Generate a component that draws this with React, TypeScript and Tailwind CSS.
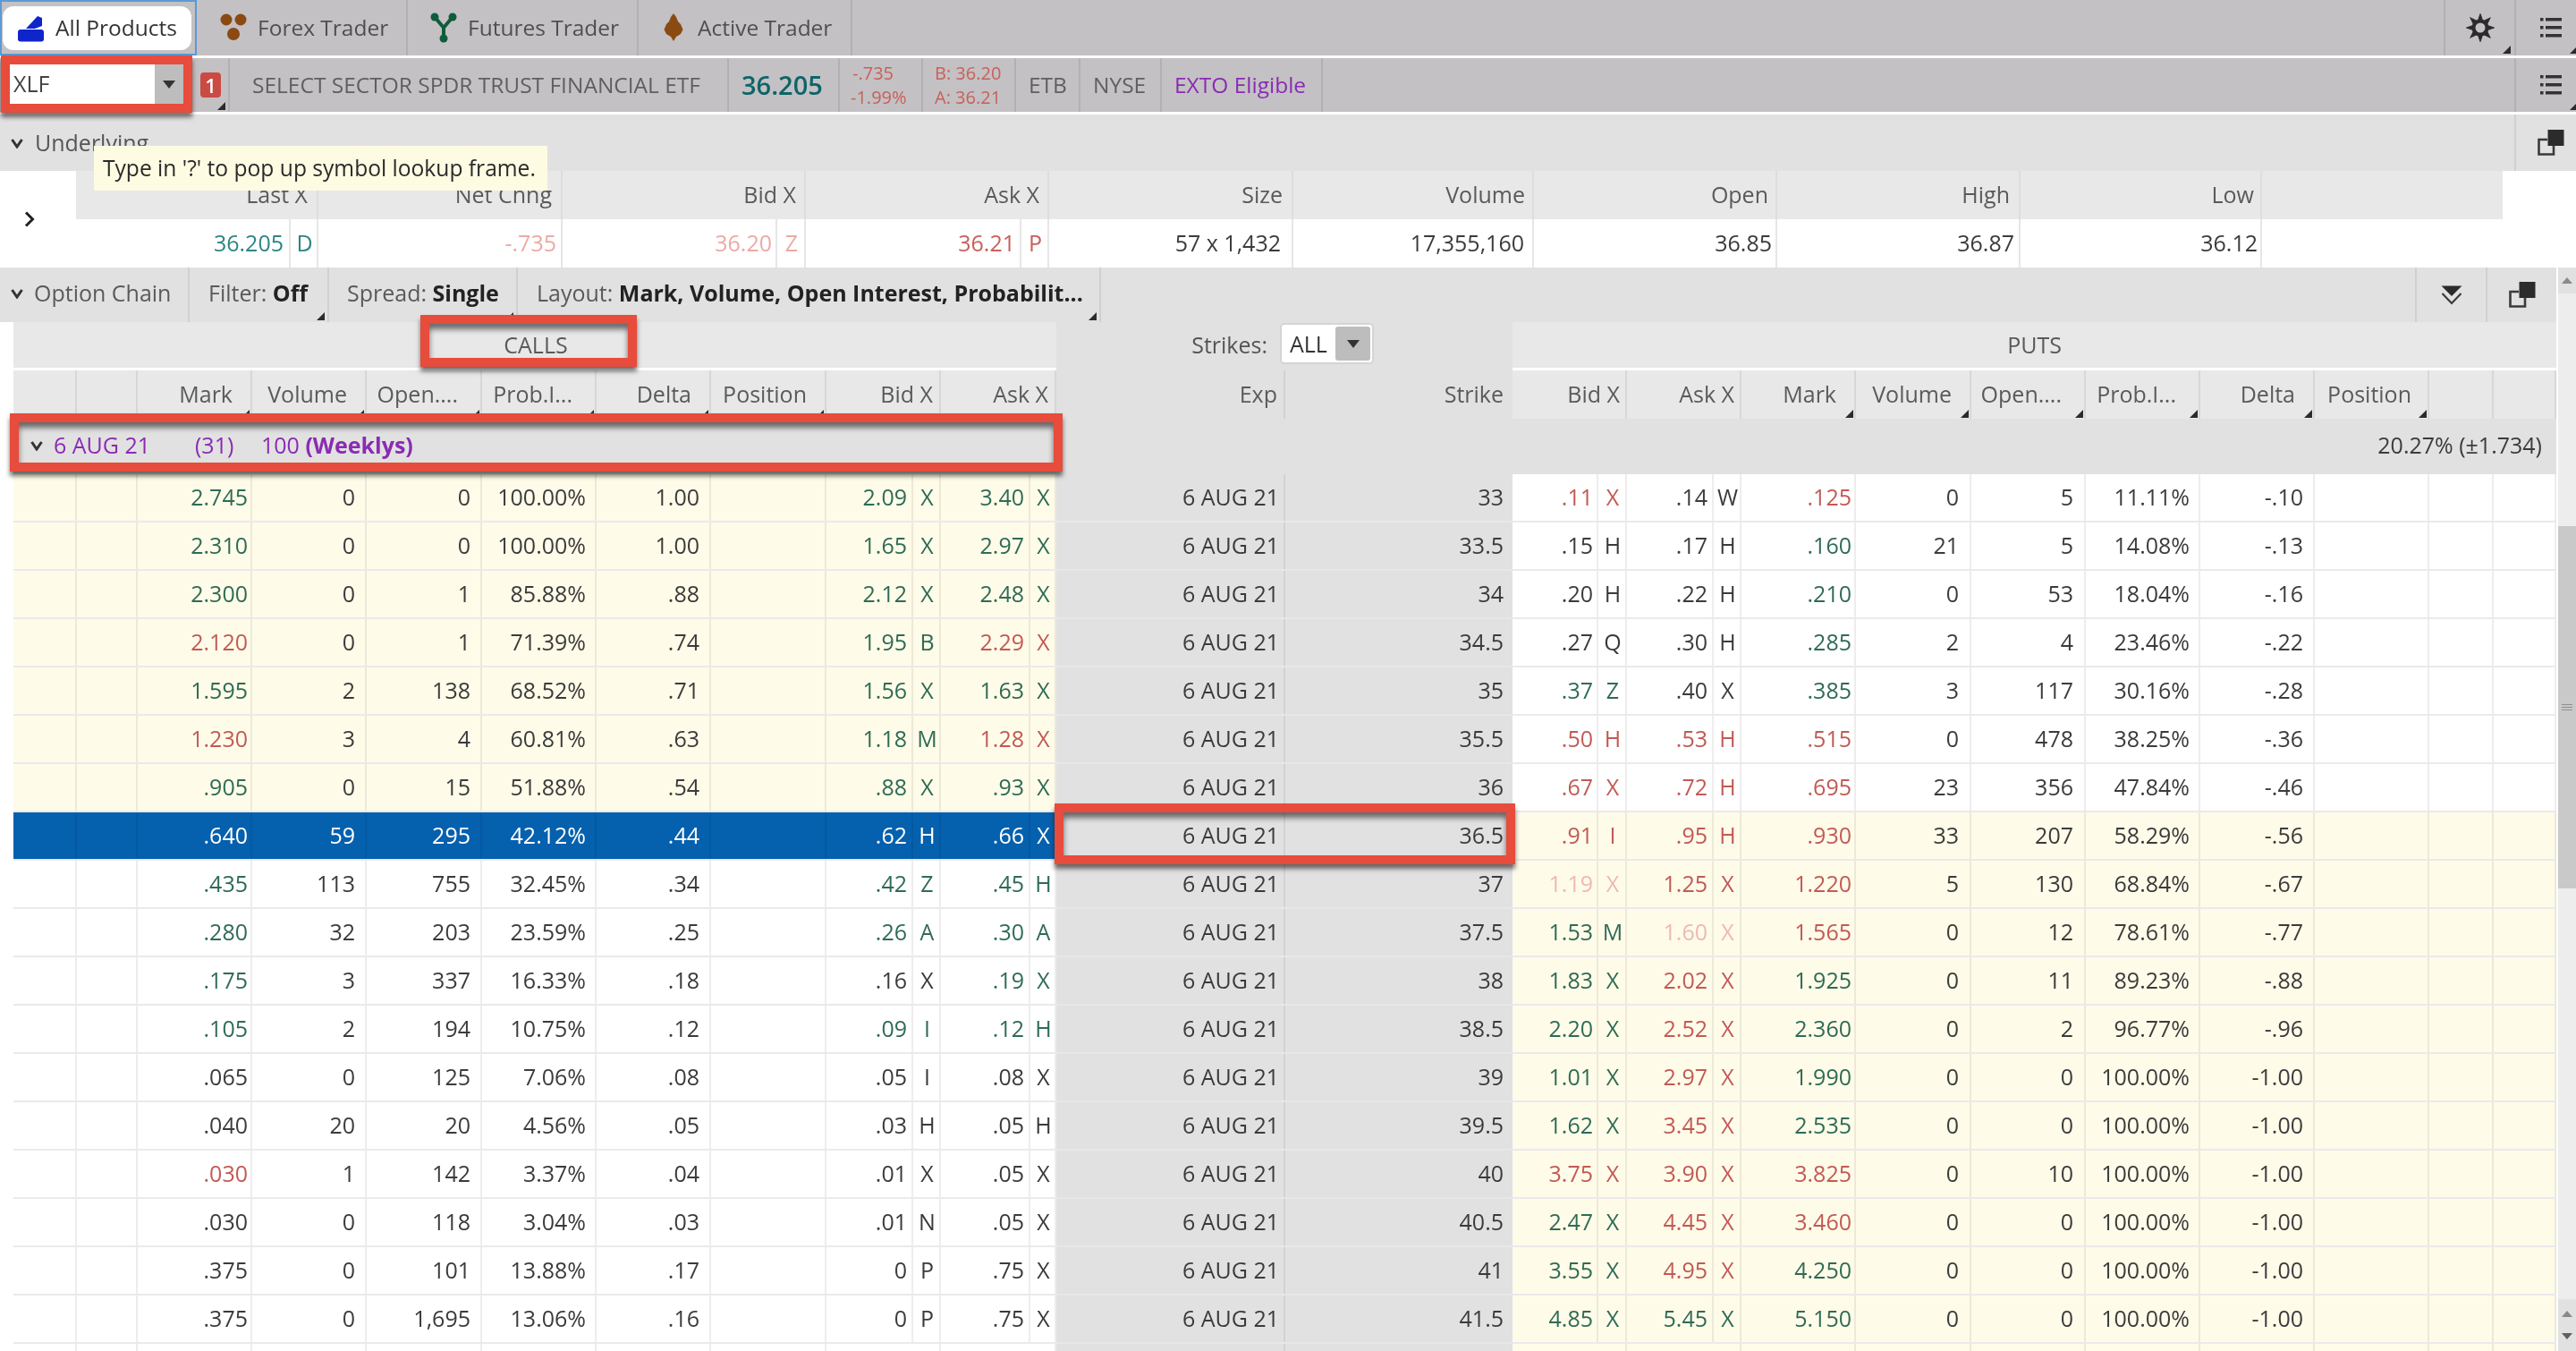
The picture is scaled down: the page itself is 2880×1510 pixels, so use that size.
import React from "react";

const C: Record<string, string> = {
  d: "text-[#3b3b3b]",
  g: "text-[#2f6b55]",
  r: "text-[#c25a54]",
  p: "text-[#efb9b4]",
  w: "text-white",
};

type CallRow = [string, string, string, string, string, string, string, string, string, string, string, string];
type PutRow = [string, string, string, string, string, string, string, string, string, string, string, string];

const calls: CallRow[] = [
  ["2.745", "g", "0", "0", "100.00%", "1.00", "2.09", "g", "X", "3.40", "g", "X"],
  ["2.310", "g", "0", "0", "100.00%", "1.00", "1.65", "g", "X", "2.97", "g", "X"],
  ["2.300", "g", "0", "1", "85.88%", ".88", "2.12", "g", "X", "2.48", "g", "X"],
  ["2.120", "r", "0", "1", "71.39%", ".74", "1.95", "g", "B", "2.29", "r", "X"],
  ["1.595", "g", "2", "138", "68.52%", ".71", "1.56", "g", "X", "1.63", "g", "X"],
  ["1.230", "r", "3", "4", "60.81%", ".63", "1.18", "g", "M", "1.28", "r", "X"],
  [".905", "g", "0", "15", "51.88%", ".54", ".88", "g", "X", ".93", "g", "X"],
  [".640", "w", "59", "295", "42.12%", ".44", ".62", "w", "H", ".66", "w", "X"],
  [".435", "g", "113", "755", "32.45%", ".34", ".42", "g", "Z", ".45", "g", "H"],
  [".280", "g", "32", "203", "23.59%", ".25", ".26", "g", "A", ".30", "g", "A"],
  [".175", "g", "3", "337", "16.33%", ".18", ".16", "d", "X", ".19", "g", "X"],
  [".105", "g", "2", "194", "10.75%", ".12", ".09", "g", "I", ".12", "g", "H"],
  [".065", "d", "0", "125", "7.06%", ".08", ".05", "d", "I", ".08", "d", "X"],
  [".040", "d", "20", "20", "4.56%", ".05", ".03", "d", "H", ".05", "d", "H"],
  [".030", "r", "1", "142", "3.37%", ".04", ".01", "d", "X", ".05", "d", "X"],
  [".030", "d", "0", "118", "3.04%", ".03", ".01", "d", "N", ".05", "d", "X"],
  [".375", "d", "0", "101", "13.88%", ".17", "0", "d", "P", ".75", "d", "X"],
  [".375", "d", "0", "1,695", "13.06%", ".16", "0", "d", "P", ".75", "d", "X"],
];

const strikes = ["33", "33.5", "34", "34.5", "35", "35.5", "36", "36.5", "37", "37.5", "38", "38.5", "39", "39.5", "40", "40.5", "41", "41.5"];

const puts: PutRow[] = [
  [".11", "r", "X", ".14", "d", "W", ".125", "r", "0", "5", "11.11%", "-.10"],
  [".15", "d", "H", ".17", "d", "H", ".160", "g", "21", "5", "14.08%", "-.13"],
  [".20", "d", "H", ".22", "d", "H", ".210", "g", "0", "53", "18.04%", "-.16"],
  [".27", "d", "Q", ".30", "d", "H", ".285", "g", "2", "4", "23.46%", "-.22"],
  [".37", "g", "Z", ".40", "d", "X", ".385", "g", "3", "117", "30.16%", "-.28"],
  [".50", "r", "H", ".53", "r", "H", ".515", "r", "0", "478", "38.25%", "-.36"],
  [".67", "r", "X", ".72", "r", "H", ".695", "r", "23", "356", "47.84%", "-.46"],
  [".91", "r", "I", ".95", "r", "H", ".930", "r", "33", "207", "58.29%", "-.56"],
  ["1.19", "p", "X", "1.25", "r", "X", "1.220", "r", "5", "130", "68.84%", "-.67"],
  ["1.53", "g", "M", "1.60", "p", "X", "1.565", "r", "0", "12", "78.61%", "-.77"],
  ["1.83", "g", "X", "2.02", "r", "X", "1.925", "g", "0", "11", "89.23%", "-.88"],
  ["2.20", "g", "X", "2.52", "r", "X", "2.360", "g", "0", "2", "96.77%", "-.96"],
  ["1.01", "g", "X", "2.97", "r", "X", "1.990", "g", "0", "0", "100.00%", "-1.00"],
  ["1.62", "g", "X", "3.45", "r", "X", "2.535", "g", "0", "0", "100.00%", "-1.00"],
  ["3.75", "r", "X", "3.90", "r", "X", "3.825", "r", "0", "10", "100.00%", "-1.00"],
  ["2.47", "g", "X", "4.45", "r", "X", "3.460", "r", "0", "0", "100.00%", "-1.00"],
  ["3.55", "g", "X", "4.95", "r", "X", "4.250", "g", "0", "0", "100.00%", "-1.00"],
  ["4.85", "g", "X", "5.45", "g", "X", "5.150", "g", "0", "0", "100.00%", "-1.00"],
];

const CALL_GRID = "grid grid-cols-[71px_68px_128px_128px_129px_128px_128px_129px_128px_129px] w-[1166px] shrink-0";
const PUT_GRID = "grid grid-cols-[128px_128px_128px_129px_128px_128px_128px_128px_72px_70px] w-[1167px] shrink-0";
const MID_GRID = "grid grid-cols-[256px_254px] w-[510px] shrink-0";
const UND_GRID = "grid grid-cols-[271px_273px_272px_272px_273px_269px_272px_272px_270px_269px] w-[2713px]";
const VLINE = "border-r-2 border-black/[0.07]";

function Tri({ className = "right-[2px] bottom-[1px]" }: { className?: string }) {
  return (
    <svg className={`absolute ${className}`} width="9" height="9" viewBox="0 0 9 9">
      <path d="M9 0V9H0Z" fill="#2b2b2b" />
    </svg>
  );
}

function Sep() {
  return <div className="w-[2px] self-stretch bg-[#b2b0b3] shrink-0" />;
}

function Chevron({ className = "" }: { className?: string }) {
  return (
    <svg className={className} width="14" height="12" viewBox="0 0 14 12">
      <path d="M1.5 2 7 10 12.5 2" fill="none" stroke="#333" strokeWidth="3" />
    </svg>
  );
}

function ListIcon() {
  return (
    <svg width="24" height="24" viewBox="0 0 24 24" fill="#333">
      <rect x="0" y="1" width="3.5" height="3.5" />
      <rect x="6" y="1" width="18" height="3.5" />
      <rect x="0" y="10" width="3.5" height="3.5" />
      <rect x="6" y="10" width="18" height="3.5" />
      <rect x="0" y="19" width="3.5" height="3.5" />
      <rect x="6" y="19" width="18" height="3.5" />
    </svg>
  );
}

function Popout() {
  return (
    <svg width="30" height="29" viewBox="0 0 30 29">
      <rect x="11.5" y="0" width="18" height="18" fill="#2b2b2b" />
      <path d="M11 11H1.5V27.5H18V18" fill="none" stroke="#3a3a3a" strokeWidth="2.6" />
    </svg>
  );
}

function Gear() {
  const rays = [0, 45, 90, 135, 180, 225, 270, 315];
  return (
    <svg width="32" height="32" viewBox="0 0 32 32">
      {rays.map((a) => (
        <path key={a} d="M16 0.5 18.6 8H13.4Z" fill="#2b2b2b" stroke="#2b2b2b" strokeWidth="1" transform={`rotate(${a} 16 16)`} />
      ))}
      <circle cx="16" cy="16" r="7.5" fill="none" stroke="#2b2b2b" strokeWidth="4" />
    </svg>
  );
}

function Tabs() {
  return (
    <div className="flex h-[62px] bg-[#c3c1c4] text-[24.5px] text-[#4f4f4f]">
      <div className="w-[220px] shrink-0 border-2 border-[#5a9ad6] pt-[5px] pb-[4px] pl-[1px] pr-[4px]">
        <div className="h-full bg-white rounded-[12px] flex items-center pl-[17px] gap-[12px] text-[#333]">
          <svg width="30" height="30" viewBox="0 0 30 30">
            <path d="M9 15 22 1l5 2v9l-8 3Z" fill="#1024cc" />
            <rect x="0" y="16" width="29" height="13.5" rx="3" fill="#1024cc" />
          </svg>
          All Products
        </div>
      </div>
      <div className="w-[236px] shrink-0 flex items-center pl-[26px] gap-[12px] border-r-2 border-[#b2b0b3]">
        <svg width="30" height="32" viewBox="0 0 30 32">
          <circle cx="7" cy="7" r="6.5" fill="#8a4a12" />
          <circle cx="23" cy="7" r="6.5" fill="#8a4a12" />
          <circle cx="15" cy="23" r="7" fill="#8a4a12" />
        </svg>
        Forex Trader
      </div>
      <div className="w-[258px] shrink-0 flex items-center pl-[25px] gap-[12px] border-r-2 border-[#b2b0b3]">
        <svg width="30" height="34" viewBox="0 0 30 34">
          <path d="M5 5 15 17 25 5M15 17V29" fill="none" stroke="#0f5c3c" strokeWidth="4" />
          <circle cx="5" cy="5" r="4.5" fill="#0f5c3c" />
          <circle cx="25" cy="5" r="4.5" fill="#0f5c3c" />
          <circle cx="15" cy="29" r="4.5" fill="#0f5c3c" />
        </svg>
        Futures Trader
      </div>
      <div className="w-[239px] shrink-0 flex items-center pl-[28px] gap-[16px] border-r-2 border-[#b2b0b3]">
        <svg width="22" height="32" viewBox="0 0 22 32">
          <path d="M11 0 14 4 16 9 19 12 21.500 18 19 23 14 26 11 31 8 26 3 23 0.500 18 3 12 6 9 8 4Z" fill="#8a4a12" />
        </svg>
        Active Trader
      </div>
      <div className="flex-1" />
      <div className="relative w-[79px] shrink-0 flex items-center justify-center border-l-2 border-[#b2b0b3]">
        <Gear />
        <Tri className="right-[4px] bottom-[2px]" />
      </div>
      <div className="relative w-[69px] shrink-0 flex items-center justify-center pl-[10px] border-l-2 border-[#b2b0b3]">
        <ListIcon />
        <Tri className="right-[-2px] bottom-[2px]" />
      </div>
    </div>
  );
}

function QuoteBar() {
  return (
    <div className="flex h-[60px] mt-[3px] bg-[#c3c1c4] text-[24.5px] text-[#5f5f5f]">
      <div className="w-[217px] shrink-0" />
      <div className="relative w-[38px] shrink-0 flex items-center pl-[7px]">
        <div className="w-[23px] h-[28px] rounded-[4px] bg-[#cb4a43] text-white text-[22px] font-semibold flex items-center justify-center">1</div>
        <Tri className="right-[3px] bottom-[2px]" />
      </div>
      <Sep />
      <div className="w-[556px] shrink-0 flex items-center pl-[25px]">SELECT SECTOR SPDR TRUST FINANCIAL ETF</div>
      <Sep />
      <div className="w-[122px] shrink-0 flex items-center pl-[14px] text-[29px] font-semibold text-[#0e6467]">36.205</div>
      <Sep />
      <div className="w-[91px] shrink-0 flex flex-col justify-center items-start pl-[12px] text-[20px] leading-[27px] text-[#c9605a]">
        <span className="pl-[2px]">-.735</span>
        <span>-1.99%</span>
      </div>
      <Sep />
      <div className="w-[102px] shrink-0 flex flex-col justify-center pl-[13px] text-[20px] leading-[27px] text-[#c9605a]">
        <span>B: 36.20</span>
        <span>A: 36.21</span>
      </div>
      <Sep />
      <div className="w-[70px] shrink-0 flex items-center pl-[14px]">ETB</div>
      <Sep />
      <div className="w-[89px] shrink-0 flex items-center pl-[14px]">NYSE</div>
      <Sep />
      <div className="w-[178px] shrink-0 flex items-center pl-[14px] text-[#8a2bb3]">EXTO Eligible</div>
      <Sep />
      <div className="flex-1" />
      <div className="relative w-[69px] shrink-0 flex items-center justify-center pl-[10px] border-l-2 border-[#b2b0b3]">
        <ListIcon />
        <Tri className="right-[-2px] bottom-[2px]" />
      </div>
    </div>
  );
}

const undHead: [string, string][] = [
  ["Last X", "pr-[10px]"],
  ["Net Chng", "pr-[10px]"],
  ["Bid X", "pr-[9px]"],
  ["Ask X", "pr-[9px]"],
  ["Size", "pr-[10px]"],
  ["Volume", "pr-[8px]"],
  ["Open", "pr-[8px]"],
  ["High", "pr-[10px]"],
  ["Low", "pr-[7px]"],
  ["", ""],
];

function Underlying() {
  return (
    <div className="text-[25px]">
      <div className="flex h-[63px] mt-[3px] bg-[#e1e1e1] text-[#555]">
        <div className="flex-1 flex items-center pl-[12px] gap-[13px]">
          <Chevron />
          <span>Underlying</span>
        </div>
        <div className="w-[69px] shrink-0 flex items-center justify-center pl-[10px] border-l-2 border-[#d0d0d0]">
          <Popout />
        </div>
      </div>
      <div className="flex h-[108px] bg-white">
        <div className="w-[85px] shrink-0 flex items-center pl-[27px]">
          <svg width="12" height="18" viewBox="0 0 12 18">
            <path d="M2 1.5 9.5 9 2 16.5" fill="none" stroke="#222" strokeWidth="3" />
          </svg>
        </div>
        <div>
          <div className={`${UND_GRID} h-[54px] bg-[#e8e8e8] text-[#5a5a5a]`}>
            {undHead.map(([t, p], i) => (
              <div key={i} className={`flex items-center justify-end ${p} ${i < 9 ? "border-r-2 border-[#dddddd]" : ""}`}>{t}</div>
            ))}
          </div>
          <div className={`${UND_GRID} h-[54px] text-[#3b3b3b]`}>
            <div className="grid grid-cols-[240px_31px] border-r-2 border-[#e6e6e6] text-[#2e8585]">
              <div className="flex items-center justify-end pr-[6px] border-r-2 border-[#e6e6e6]">36.205</div>
              <div className="flex items-center justify-center">D</div>
            </div>
            <div className="flex items-center justify-end pr-[5px] border-r-2 border-[#e6e6e6] text-[#ecaaa6]">-.735</div>
            <div className="grid grid-cols-[240px_32px] border-r-2 border-[#e6e6e6] text-[#ecaaa6]">
              <div className="flex items-center justify-end pr-[4px] border-r-2 border-[#e6e6e6]">36.20</div>
              <div className="flex items-center justify-center">Z</div>
            </div>
            <div className="grid grid-cols-[241px_31px] border-r-2 border-[#e6e6e6] text-[#c9605a]">
              <div className="flex items-center justify-end pr-[5px] border-r-2 border-[#e6e6e6]">36.21</div>
              <div className="flex items-center justify-center">P</div>
            </div>
            <div className="flex items-center justify-end pr-[12px] border-r-2 border-[#e6e6e6]">57 x 1,432</div>
            <div className="flex items-center justify-end pr-[9px] border-r-2 border-[#e6e6e6]">17,355,160</div>
            <div className="flex items-center justify-end pr-[4px] border-r-2 border-[#e6e6e6]">36.85</div>
            <div className="flex items-center justify-end pr-[5px] border-r-2 border-[#e6e6e6]">36.87</div>
            <div className="flex items-center justify-end pr-[3px] border-r-2 border-[#e6e6e6]">36.12</div>
            <div />
          </div>
        </div>
      </div>
    </div>
  );
}

function ChainBar() {
  return (
    <div className="flex h-[61px] bg-[#e1e1e1] text-[25px] text-[#5a5a5a]">
      <div className="w-[212px] shrink-0 flex items-center pl-[12px] pb-[3px] gap-[12px] border-r-2 border-[#d0d0d0]">
        <Chevron />
        Option Chain
      </div>
      <div className="relative w-[156px] shrink-0 flex items-center pl-[21px] pb-[3px] border-r-2 border-[#d0d0d0]">
        <span>Filter: <b className="font-bold text-[#222]">Off</b></span>
        <Tri className="right-[3px] bottom-[2px]" />
      </div>
      <div className="relative w-[211px] shrink-0 flex items-center pl-[20px] pb-[3px] border-r-2 border-[#d0d0d0]">
        <span>Spread: <b className="font-bold text-[#222]">Single</b></span>
        <Tri className="right-[3px] bottom-[2px]" />
      </div>
      <div className="relative w-[652px] shrink-0 flex items-center pl-[21px] pb-[3px] border-r-2 border-[#d0d0d0]">
        <span className="whitespace-nowrap">Layout: <b className="font-bold text-[#222]">Mark, Volume, Open Interest, Probabilit...</b></span>
        <Tri className="right-[3px] bottom-[2px]" />
      </div>
      <div className="flex-1" />
      <div className="w-[79px] shrink-0 flex items-center justify-center border-l-2 border-[#d0d0d0]">
        <svg width="24" height="22" viewBox="0 0 24 22">
          <path d="M0.5 0.5H23.5L12 12Z" fill="#2b2b2b" />
          <path d="M1.5 9 12 20 22.500 9" fill="none" stroke="#3a3a3a" strokeWidth="2.2" />
        </svg>
      </div>
      <div className="w-[79px] shrink-0 flex items-center justify-center border-l-2 border-[#d0d0d0]">
        <Popout />
      </div>
    </div>
  );
}

function Head({ t, pr = "pr-[20px]", tri = true }: { t: string; pr?: string; tri?: boolean }) {
  return (
    <div className={`relative flex items-center justify-end ${pr} pb-[1px] ${VLINE} whitespace-nowrap`}>
      {t}
      {tri && <Tri className="right-[1px] bottom-[1px]" />}
    </div>
  );
}

function Cell({ t, c = "d", pr = "pr-[10px]" }: { t?: string; c?: string; pr?: string }) {
  return <div className={`flex items-center justify-end ${pr} pb-[2px] ${VLINE} ${C[c]}`}>{t}</div>;
}

function Quote({ v, x, c, cols, pr }: { v: string; x: string; c: string; cols: string; pr: string }) {
  return (
    <div className={`grid ${cols} ${VLINE} ${C[c]}`}>
      <div className={`flex items-center justify-end ${pr} pb-[2px] ${VLINE}`}>{v}</div>
      <div className="flex items-center justify-center pb-[2px]">{x}</div>
    </div>
  );
}

function Chain() {
  return (
    <div className="pl-[15px] text-[25px] leading-none">
      <div className="flex h-[54px]">
        <div className="w-[1166px] shrink-0 bg-[#e8e8e8] border-b-[3px] border-white flex items-center justify-center pl-[2px] text-[#5a5a5a]">CALLS</div>
        <div className="w-[510px] shrink-0 bg-[#e1e1e1] flex items-start justify-end pr-[155px] pt-[1px]">
          <span className="text-[#555] mr-[14px] mt-[12px]">Strikes:</span>
          <div className="w-[105px] h-[46px] bg-white border-2 border-[#d4d4d4] rounded-[5px] flex items-center justify-between pl-[9px] pr-[2px] text-[#333]">
            ALL
            <div className="w-[39px] h-[38px] bg-[#bdbdbd] rounded-[3px] flex items-center justify-center">
              <svg width="14" height="9" viewBox="0 0 14 9"><path d="M0 0H14L7 9Z" fill="#333" /></svg>
            </div>
          </div>
        </div>
        <div className="w-[1167px] shrink-0 bg-[#e8e8e8] border-b-[3px] border-white flex items-center justify-center text-[#5a5a5a]">PUTS</div>
      </div>
      <div className="flex h-[54px] text-[#5a5a5a]">
        <div className={`${CALL_GRID} bg-[#e8e8e8]`}>
          <Head t="" pr="" tri={false} />
          <Head t="" pr="" tri={false} />
          <Head t="Mark" />
          <Head t="Volume" />
          <Head t="Open...." pr="pr-[25px]" />
          <Head t="Prob.I..." pr="pr-[25px]" />
          <Head t="Delta" />
          <Head t="Position" />
          <Head t="Bid X" pr="pr-[7px]" tri={false} />
          <Head t="Ask X" pr="pr-[7px]" tri={false} />
        </div>
        <div className={`${MID_GRID} bg-[#e1e1e1]`}>
          <Head t="Exp" pr="pr-[7px]" tri={false} />
          <div className="flex items-center justify-end pr-[10px] pb-[1px]">Strike</div>
        </div>
        <div className={`${PUT_GRID} bg-[#e8e8e8]`}>
          <Head t="Bid X" pr="pr-[6px]" tri={false} />
          <Head t="Ask X" pr="pr-[6px]" tri={false} />
          <Head t="Mark" />
          <Head t="Volume" />
          <Head t="Open...." pr="pr-[25px]" />
          <Head t="Prob.I..." pr="pr-[25px]" />
          <Head t="Delta" />
          <Head t="Position" pr="pr-[18px]" />
          <Head t="" pr="" tri={false} />
          <Head t="" pr="" tri={false} />
        </div>
      </div>
      <div className="flex items-center justify-between h-[62px] bg-[#e1e1e1] pl-[19px] pr-[16px] pb-[3px]">
        <div className="flex items-center text-[#8a2bb3]">
          <Chevron className="mr-[12px]" />
          <span className="w-[158px]">6 AUG 21</span>
          <span className="w-[74px]">(31)</span>
          <span>100 <b className="font-bold">(Weeklys)</b></span>
        </div>
        <span className="text-[#3b3b3b]">20.27% (±1.734)</span>
      </div>
      {calls.map((r, i) => {
        const p = puts[i];
        const callBg = i < 7 ? "bg-[#fefbe9]" : i === 7 ? "bg-[#0560ae]" : "bg-white";
        const putBg = i < 7 ? "bg-white" : "bg-[#fefbe9]";
        const sel = i === 7;
        const base = sel ? "w" : "d";
        return (
          <div key={i} className="flex h-[54px]">
            <div className={`${CALL_GRID} ${callBg} border-b-2 border-[#ebe9ec]`}>
              <Cell />
              <Cell />
              <Cell t={r[0]} c={r[1]} pr="pr-[3px]" />
              <Cell t={r[2]} c={base} pr="pr-[11px]" />
              <Cell t={r[3]} c={base} pr="pr-[11px]" />
              <Cell t={r[4]} c={base} />
              <Cell t={r[5]} c={base} pr="pr-[11px]" />
              <Cell />
              <Quote v={r[6]} c={r[7]} x={r[8]} cols="grid-cols-[97px_31px]" pr="pr-[5px]" />
              <Quote v={r[9]} c={r[10]} x={r[11]} cols="grid-cols-[100px_29px]" pr="pr-[5px]" />
            </div>
            <div className={`${MID_GRID} bg-[#e1e1e1] border-b-2 border-[#e7e7e7] text-[#3b3b3b]`}>
              <div className="flex items-center justify-end pr-[5px] pb-[2px] border-r-2 border-[#d2d2d2]">6 AUG 21</div>
              <div className="flex items-center justify-end pr-[10px] pb-[2px]">{strikes[i]}</div>
            </div>
            <div className={`${PUT_GRID} ${putBg} border-b-2 border-[#ebe9ec]`}>
              <Quote v={p[0]} c={p[1]} x={p[2]} cols="grid-cols-[96px_32px]" pr="pr-[4px]" />
              <Quote v={p[3]} c={p[4]} x={p[5]} cols="grid-cols-[97px_31px]" pr="pr-[5px]" />
              <Cell t={p[6]} c={p[7]} pr="pr-[3px]" />
              <Cell t={p[8]} pr="pr-[12px]" />
              <Cell t={p[9]} pr="pr-[12px]" />
              <Cell t={p[10]} />
              <Cell t={p[11]} pr="pr-[11px]" />
              <Cell />
              <Cell />
              <Cell />
            </div>
          </div>
        );
      })}
      <div className="flex h-[8px]">
        <div className={`${CALL_GRID} bg-white`}>
          {Array.from({ length: 10 }).map((_, k) => <div key={k} className={VLINE} />)}
        </div>
        <div className={`${MID_GRID} bg-[#e1e1e1]`}>
          <div className="border-r-2 border-[#d2d2d2]" />
          <div />
        </div>
        <div className={`${PUT_GRID} bg-[#fefbe9]`}>
          {Array.from({ length: 10 }).map((_, k) => <div key={k} className={VLINE} />)}
        </div>
      </div>
    </div>
  );
}

function Scrollbar() {
  return (
    <div className="ml-[2px] w-[20px] shrink-0 bg-[#ededed] flex flex-col">
      <div className="h-[29px] bg-[#e1e1e1] flex items-center justify-center">
        <svg width="12" height="7" viewBox="0 0 12 7"><path d="M0 7H12L6 0Z" fill="#8a8a8a" /></svg>
      </div>
      <div className="h-[260px]" />
      <div className="h-[405px] bg-[#c9c9c9] flex flex-col items-center justify-center gap-[2px]">
        <div className="w-[12px] h-[1px] bg-[#8f8f8f]" />
        <div className="w-[12px] h-[1px] bg-[#8f8f8f]" />
        <div className="w-[12px] h-[1px] bg-[#8f8f8f]" />
      </div>
      <div className="flex-1" />
      <div className="h-[58px] bg-[#e1e1e1] flex flex-col items-center justify-center gap-[18px]">
        <svg width="12" height="7" viewBox="0 0 12 7"><path d="M0 7H12L6 0Z" fill="#8a8a8a" /></svg>
        <svg width="12" height="7" viewBox="0 0 12 7"><path d="M0 0H12L6 7Z" fill="#5f5f5f" /></svg>
      </div>
    </div>
  );
}

function RedBox({ className, children }: { className: string; children?: React.ReactNode }) {
  return (
    <div className={`absolute border-[10px] border-[#e74c3c] shadow-[0_5px_5px_rgba(0,0,0,0.55),inset_0_6px_6px_rgba(0,0,0,0.55)] ${className}`}>
      {children}
    </div>
  );
}

export default function App() {
  return (
    <div className="relative w-[2880px] h-[1510px] overflow-hidden bg-white font-['Open_Sans',sans-serif] blur-[0.6px]">
      <Tabs />
      <QuoteBar />
      <Underlying />
      <div className="flex">
        <div className="w-[2858px] shrink-0">
          <ChainBar />
          <Chain />
        </div>
        <Scrollbar />
      </div>

      <div className="absolute left-[105px] top-[163px] w-[507px] h-[50px] bg-[#fdfbe2] flex items-center pl-[10px] text-[24.6px] text-[#2a2a2a]">
        Type in '?' to pop up symbol lookup frame.
      </div>

      <RedBox className="left-[1px] top-[62px] w-[214px] h-[64px]">
        <div className="flex h-full">
          <div className="flex-1 bg-white flex items-center pl-[4px] text-[25px] text-[#444]">XLF</div>
          <div className="w-[32px] bg-[#bdbdbd] flex items-center justify-center">
            <svg width="14" height="9" viewBox="0 0 14 9"><path d="M0 0H14L7 9Z" fill="#333" /></svg>
          </div>
        </div>
      </RedBox>
      <RedBox className="left-[470px] top-[352px] w-[242px] h-[58px]" />
      <RedBox className="left-[11px] top-[462px] w-[1177px] h-[65px]" />
      <RedBox className="left-[1179px] top-[898px] w-[515px] h-[68px]" />
    </div>
  );
}
